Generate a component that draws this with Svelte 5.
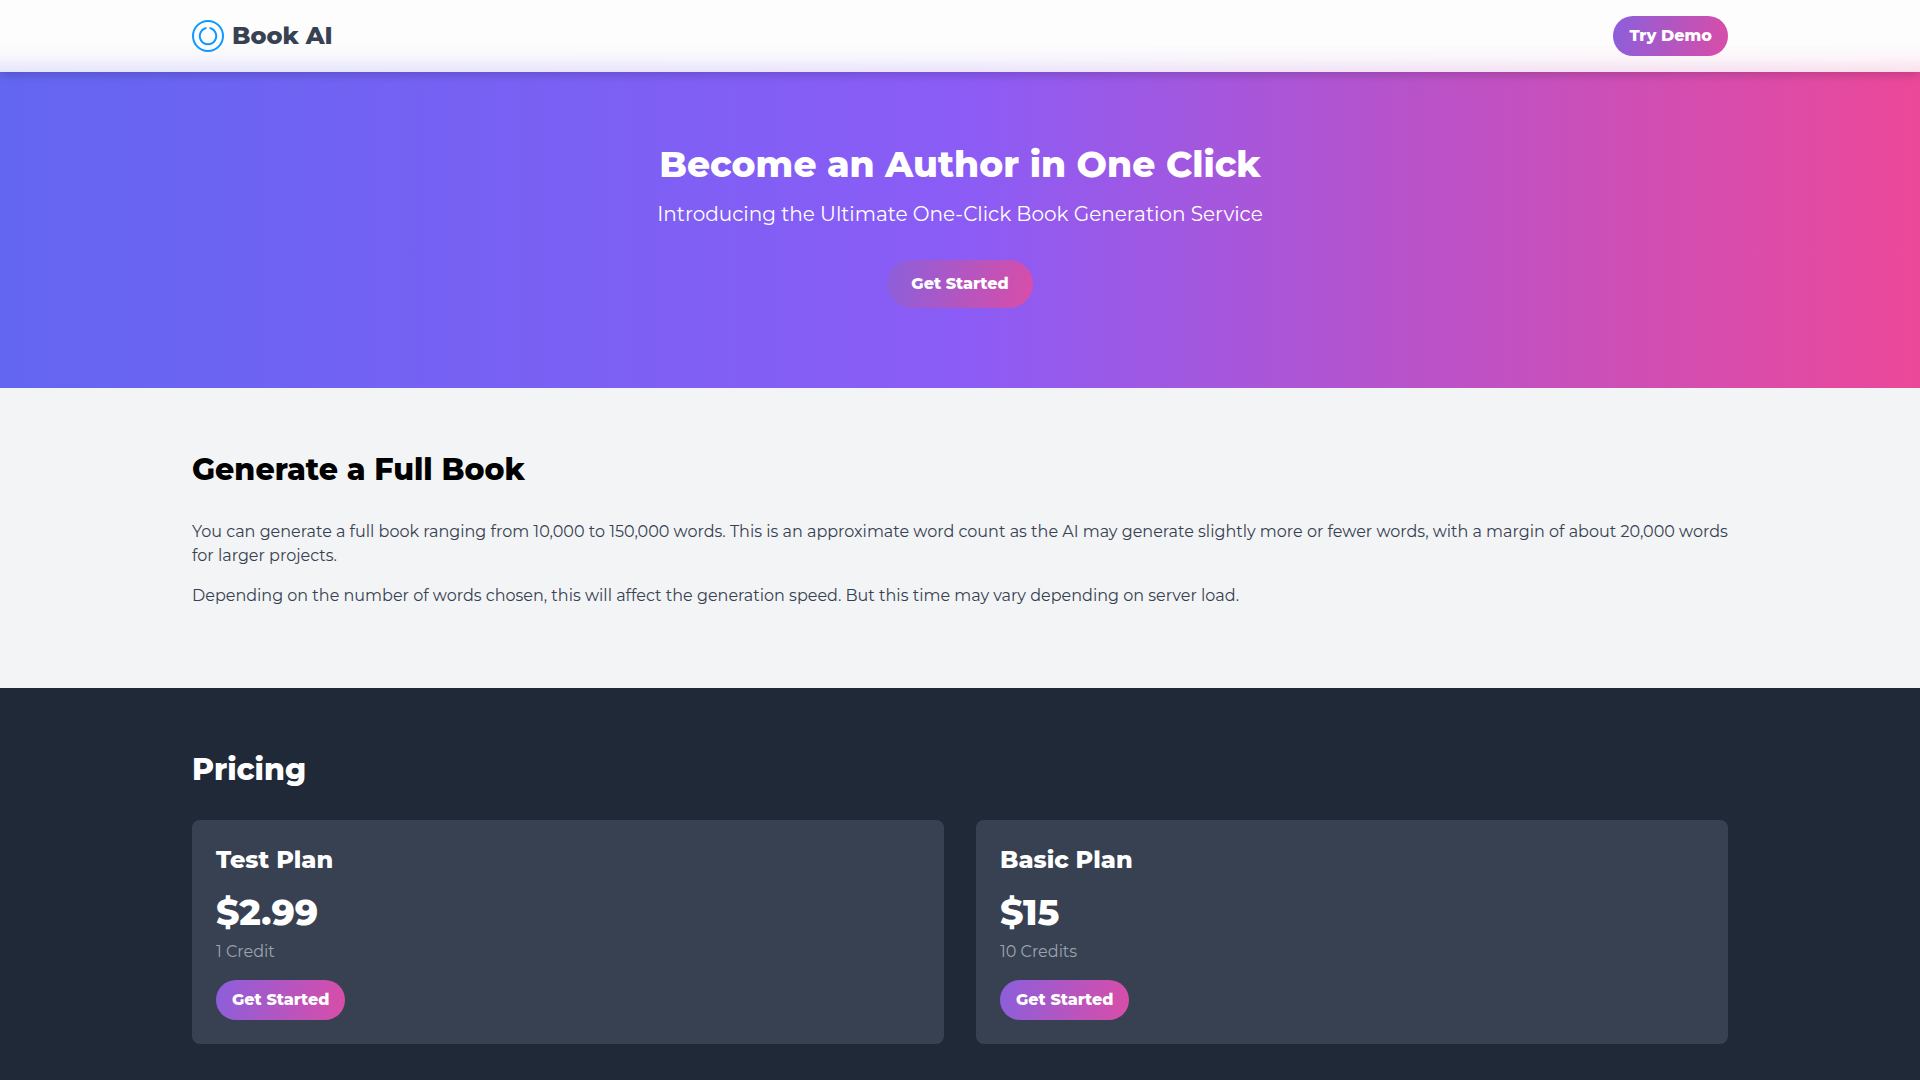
<script>
  const plans = [
    { name: 'Test Plan', price: '$2.99', credits: '1 Credit' },
    { name: 'Basic Plan', price: '$15', credits: '10 Credits' }
  ];
</script>

<header class="topbar">
  <div class="container bar">
    <a class="brand" href="#top">
      <svg viewBox="0 0 32 32" width="32" height="32" fill="none" stroke="#0d99ff" stroke-width="2" aria-hidden="true">
        <circle cx="16" cy="16" r="15" />
        <path d="M17.6 8 A8.2 8.2 0 1 1 14.4 8" />
      </svg>
      <span>Book AI</span>
    </a>
    <button class="pill" type="button">Try Demo</button>
  </div>
</header>

<main>
  <section class="hero">
    <h1>Become an Author in One Click</h1>
    <p>Introducing the Ultimate One-Click Book Generation Service</p>
    <button class="pill large" type="button">Get Started</button>
  </section>

  <section class="about">
    <div class="container">
      <h2>Generate a Full Book</h2>
      <p>
        You can generate a full book ranging from 10,000 to 150,000 words. This is an approximate word count as the AI may generate slightly more or fewer words, with a margin of about 20,000 words for larger projects.
      </p>
      <p>
        Depending on the number of words chosen, this will affect the generation speed. But this time may vary depending on server load.
      </p>
    </div>
  </section>

  <section class="pricing">
    <div class="container">
      <h2>Pricing</h2>
      <div class="plans">
        {#each plans as plan}
          <article class="card">
            <h3>{plan.name}</h3>
            <div class="price">{plan.price}</div>
            <div class="credits">{plan.credits}</div>
            <button class="pill" type="button">Get Started</button>
          </article>
        {/each}
      </div>
    </div>
  </section>
</main>

<style>
  :global(body) {
    margin: 0;
    background: #1f2937;
    font-family: Montserrat, Inter, 'Open Sans', sans-serif;
    font-size: 16px;
    line-height: 24px;
    overflow-x: hidden;
  }

  h1,
  h2,
  h3,
  p {
    margin: 0;
  }

  .container {
    box-sizing: border-box;
    width: 100%;
    max-width: 1536px;
    margin: 0 auto;
  }

  .topbar {
    position: relative;
    padding: 16px 0;
    background: #fdfdfd;
    box-shadow: 0 2px 10px rgba(0, 0, 0, 0.2);
  }

  /* Soft glow of the hero colours along the bottom of the bar */
  .topbar::before {
    content: '';
    position: absolute;
    inset: auto 0 0;
    height: 28px;
    background: linear-gradient(to right, #6366f1, #8b5cf6 50%, #ec4899);
    opacity: 0.16;
    mask-image: linear-gradient(to top, #000, rgba(0, 0, 0, 0.3) 50%, transparent);
  }

  .bar {
    position: relative;
    display: flex;
    align-items: center;
    justify-content: space-between;
  }

  .brand {
    display: flex;
    align-items: center;
    gap: 8px;
    color: #374151;
    font-size: 24px;
    font-weight: 800;
    line-height: 32px;
    text-decoration: none;
  }

  .pill {
    padding: 8px 16px;
    border: 0;
    border-radius: 24px;
    background: linear-gradient(100deg, #8b5fdb, #d94da8);
    color: #fff;
    font: inherit;
    font-weight: 800;
    cursor: pointer;
  }

  .pill.large {
    padding: 12px 24px;
  }

  .hero {
    padding: 72px 16px 80px;
    background: linear-gradient(to right, #6366f1, #8b5cf6 50%, #ec4899);
    color: #fff;
    text-align: center;
  }

  h1 {
    margin-bottom: 16px;
    font-size: 36px;
    font-weight: 800;
    line-height: 40px;
  }

  .hero p {
    margin-bottom: 32px;
    font-size: 20px;
    line-height: 28px;
  }

  .about,
  .pricing {
    padding: 64px 0;
  }

  .about {
    background: #f3f4f6;
  }

  h2 {
    margin-bottom: 32px;
    font-size: 30px;
    font-weight: 800;
    line-height: 36px;
  }

  .about p {
    margin-bottom: 16px;
    color: #374151;
  }

  .pricing {
    padding-bottom: 36px;
    background: #1f2937;
    color: #fff;
  }

  .plans {
    display: grid;
    grid-template-columns: repeat(auto-fit, minmax(320px, 1fr));
    gap: 32px;
  }

  .card {
    padding: 24px;
    border-radius: 8px;
    background: #374151;
  }

  h3 {
    margin-bottom: 16px;
    font-size: 24px;
    font-weight: 800;
    line-height: 32px;
  }

  .price {
    margin-bottom: 8px;
    font-size: 36px;
    font-weight: 800;
    line-height: 40px;
  }

  .credits {
    margin-bottom: 16px;
    color: #9ca3af;
  }
</style>
